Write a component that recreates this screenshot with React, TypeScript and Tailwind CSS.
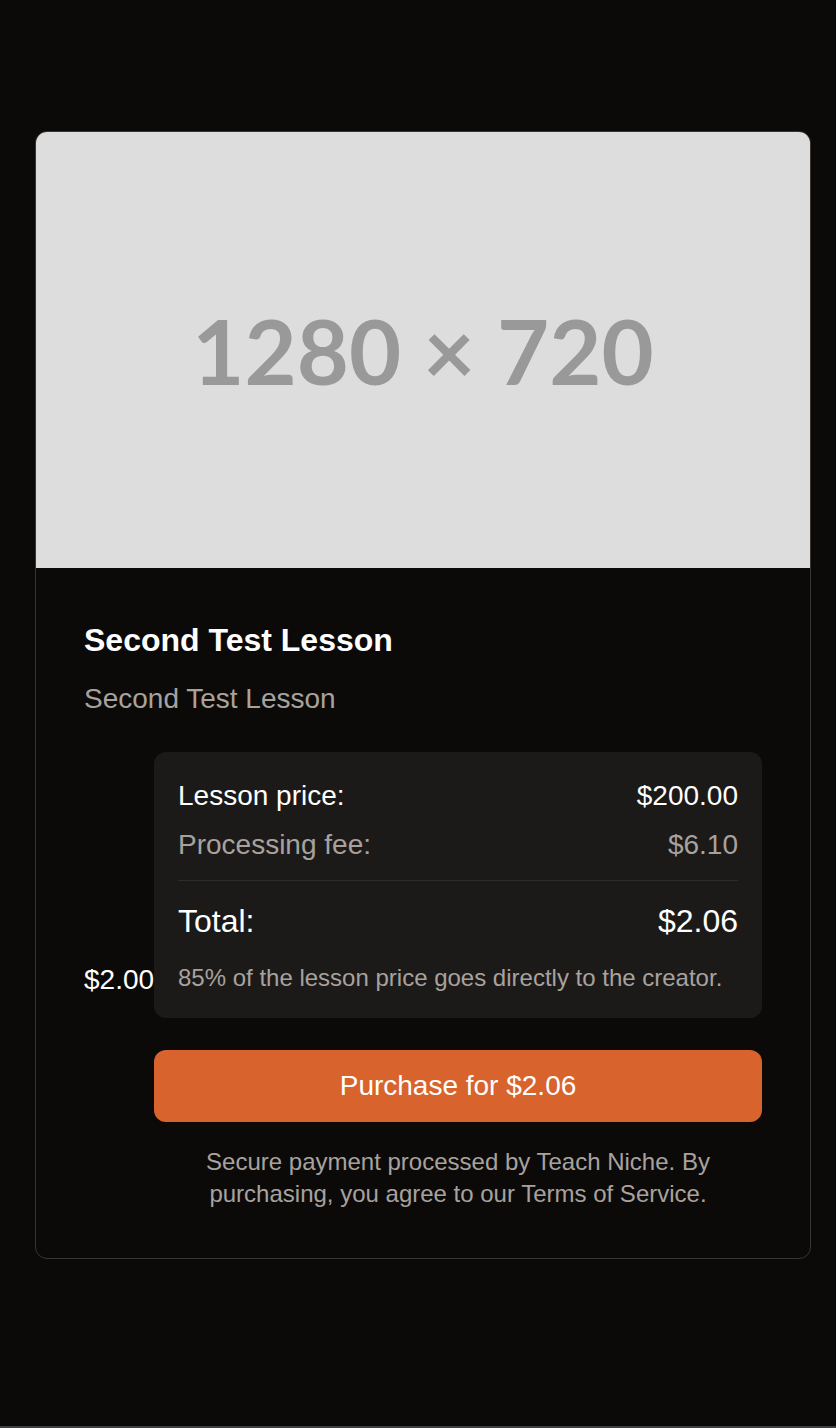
import React from "react";

export default function App() {
  const sans = { fontFamily: '"Liberation Sans", Arial, Helvetica, sans-serif' };
  return (
    <div style={sans} className="bg-[#0c0a09]">
      <div className="min-h-[1426px] pt-[131px] pl-[35px] pr-[25px]">
        <div className="rounded-[12px] border border-[#383533] bg-[#0c0a09] overflow-hidden">
          <div className="h-[436px] bg-[#dddddd] flex items-center justify-center">
            <span
              className="text-[90px] font-bold text-[#999999] leading-none"
              style={{ fontFamily: 'Lato, "Liberation Sans", sans-serif' }}
            >
              1280 × 720
            </span>
          </div>
          <div className="p-[48px]">
            <h1 className="text-[32px] leading-[48px] font-bold text-white">Second Test Lesson</h1>
            <p className="mt-[15px] text-[28px] leading-[40px] text-[#a8a29e]">Second Test Lesson</p>
            <div className="mt-[33px] flex items-start">
              <span className="w-[70px] shrink-0 mt-[208px] text-[28px] leading-[40px] text-white">$2.00</span>
              <div className="flex-1 min-w-0">
                <div className="rounded-[12px] bg-[#1c1a19] px-[24px] pt-[24px] pb-[25px]">
                  <div className="flex justify-between text-[28px] leading-[40px] text-white">
                    <span>Lesson price:</span>
                    <span>$200.00</span>
                  </div>
                  <div className="mt-[9px] flex justify-between text-[28px] leading-[40px] text-[#a8a29e]">
                    <span>Processing fee:</span>
                    <span>$6.10</span>
                  </div>
                  <div className="mt-[15px] border-t border-[#2e2b29] pt-[19px]">
                    <div className="flex justify-between text-[32px] leading-[42px] text-white">
                      <span>Total:</span>
                      <span>$2.06</span>
                    </div>
                  </div>
                  <p className="mt-[21px] text-[24px] leading-[30px] text-[#a8a29e]">
                    85% of the lesson price goes directly to the creator.
                  </p>
                </div>
                <button className="mt-[32px] w-full h-[72px] rounded-[12px] bg-[#d9632c] text-white text-[28px] flex items-center justify-center">
                  Purchase for $2.06
                </button>
                <p className="mt-[24px] text-center text-[24px] leading-[32px] text-[#a8a29e]">
                  Secure payment processed by Teach Niche. By purchasing, you agree to our Terms of Service.
                </p>
              </div>
            </div>
          </div>
        </div>
      </div>
      <div className="h-[2px] bg-[#404040]" />
    </div>
  );
}
